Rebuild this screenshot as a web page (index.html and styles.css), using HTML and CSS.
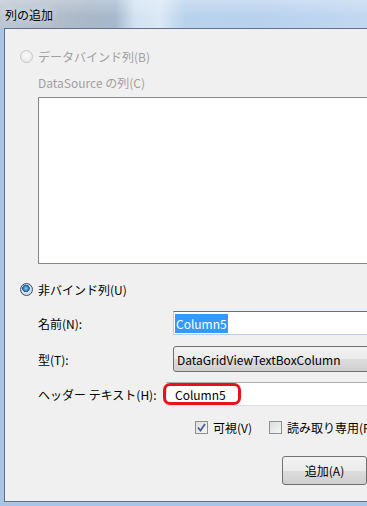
FILE: index.html
```html
<!DOCTYPE html>
<html lang="ja">
<head>
    <meta charset="UTF-8">
    <title>列の追加</title>
    <link rel="stylesheet" href="styles.css">
</head>
<body>
    <div class="window">
        <div class="titlebar">
            <span class="title">列の追加</span>
        </div>
        <div class="client">
            <div class="radio-row disabled">
                <span class="radio"></span>
                <span>データバインド列(B)</span>
            </div>
            <div class="caption disabled">DataSource の列(C)</div>
            <div class="listbox"></div>

            <div class="radio-row radio-unbound">
                <span class="radio checked"></span>
                <span>非バインド列(U)</span>
            </div>

            <div class="field field-name">
                <span class="field-label">名前(N):</span>
                <div class="textbox focused"><span class="selection">Column5</span></div>
            </div>
            <div class="field field-type">
                <span class="field-label">型(T):</span>
                <div class="combo">DataGridViewTextBoxColumn</div>
            </div>
            <div class="field field-header">
                <span class="field-label">ヘッダー テキスト(H):</span>
                <div class="textbox header-box">
                    <span>Column5</span>
                    <!-- red annotation ring drawn over the textbox -->
                    <span class="mark"></span>
                </div>
            </div>

            <div class="checks">
                <label class="check-item">
                    <span class="checkbox">
                        <svg width="9" height="9" viewBox="0 0 9 9"><path d="M1 4.5 L3.5 7.5 L8 1" fill="none" stroke="#4a5f97" stroke-width="1.8"/></svg>
                    </span>
                    <span>可視(V)</span>
                </label>
                <label class="check-item">
                    <span class="checkbox"></span>
                    <span>読み取り専用(R)</span>
                </label>
            </div>

            <div class="actions">
                <button class="button">追加(A)</button>
            </div>
        </div>
    </div>
</body>
</html>
```

FILE: styles.css
```css
body {
    margin: 0;
    padding: 0;
    overflow: hidden;
    font-family: 'Noto Sans CJK JP', 'Noto Sans', sans-serif;
    font-size: 12px;
    color: #000;
}

.window {
    width: 367px;
    height: 506px;
    overflow: hidden;
    background: #a8c5e5;
}

.titlebar {
    height: 28px;
    display: flex;
    align-items: center;
    padding-left: 5px;
    background:
        linear-gradient(180deg, rgba(255, 255, 255, 0.25), rgba(255, 255, 255, 0) 60%),
        linear-gradient(90deg, #bdc7d3 0, #aab7c6 90px, #a6b9cf 115px, #d3e2f1 135px, #dbe8f5 160px, #b9d2ec 185px, #b8d1ee 260px, #c2d8f1 367px);
}

.title {
    font-size: 12px;
    color: #000;
    text-shadow: 0 0 6px rgba(255, 255, 255, 0.8);
}

.client {
    width: 420px;
    height: 474px;
    box-sizing: border-box;
    margin-left: 4px;
    border: 1px solid #5f7088;
    background: #f0f0f0;
    display: flex;
    flex-direction: column;
}

.disabled {
    color: #a0a0a0;
}

.radio-row {
    height: 16px;
    display: flex;
    align-items: center;
    gap: 5px;
    padding-left: 15px;
    margin-top: 19px;
}

.radio-unbound {
    margin-top: 17px;
    color: #000;
}

.radio {
    width: 13px;
    height: 13px;
    box-sizing: border-box;
    border-radius: 50%;
    border: 1px solid #c3c6ca;
    background: radial-gradient(circle at 50% 40%, #fbfbfb 0, #e2e2e2 100%);
}

.radio.checked {
    border-color: #3f4f63;
    background:
        radial-gradient(circle at 45% 40%, #9fd6f6 0, #3d8fce 2px, #1c5a94 3.5px, transparent 4px),
        radial-gradient(circle, #e9eef3 0, #c4ccd6 100%);
}

.caption {
    height: 16px;
    line-height: 16px;
    padding-left: 33px;
    margin-top: 11px;
}

.listbox {
    height: 167px;
    box-sizing: border-box;
    margin: 6px 0 0 33px;
    border: 1px solid #828790;
    background: #fff;
}

.field {
    display: flex;
    align-items: center;
    padding-left: 33px;
}

.field-label {
    width: 135px;
    flex-shrink: 0;
}

.field-name {
    margin-top: 14px;
}

.field-type {
    margin-top: 11px;
}

.field-header {
    margin-top: 10px;
}

.field-header .field-label {
    width: 128px;
}

.textbox {
    flex: 1;
    height: 24px;
    box-sizing: border-box;
    display: flex;
    align-items: center;
    padding-left: 1px;
    border: 1px solid #dbdfe6;
    border-top-color: #abadb3;
    background: #fff;
}

.textbox.focused {
    border-color: #b5cfe7;
    border-top-color: #3d7bad;
}

.selection {
    background: #3399ff;
    color: #fff;
    line-height: 19px;
    padding: 0 1px;
}

.header-box {
    position: relative;
    padding-left: 8px;
}

.mark {
    position: absolute;
    left: -4px;
    top: 0;
    width: 78px;
    height: 22px;
    box-sizing: border-box;
    border: 3px solid #e8121b;
    border-radius: 7px;
}

.combo {
    flex: 1;
    height: 26px;
    box-sizing: border-box;
    display: flex;
    align-items: center;
    padding-left: 3px;
    border: 1px solid #707070;
    border-radius: 3px;
    background: linear-gradient(180deg, #f2f2f2 0, #ebebeb 50%, #dddddd 51%, #cfcfcf 100%);
}

.checks {
    height: 16px;
    display: flex;
    align-items: center;
    padding-left: 190px;
    margin-top: 13px;
}

.check-item {
    display: flex;
    align-items: center;
    gap: 5px;
    margin-right: 17px;
    white-space: nowrap;
}

.checkbox {
    width: 13px;
    height: 13px;
    box-sizing: border-box;
    border: 1px solid #8e8f8f;
    background: linear-gradient(135deg, #dcdcdc 0, #f6f6f6 100%);
    display: flex;
    align-items: center;
    justify-content: center;
}

.actions {
    margin-top: 21px;
    padding-left: 277px;
}

.button {
    width: 85px;
    height: 29px;
    font-family: inherit;
    font-size: 12px;
    color: #000;
    border: 1px solid #707070;
    border-radius: 3px;
    background: linear-gradient(180deg, #f2f2f2 0, #ebebeb 50%, #dddddd 51%, #cfcfcf 100%);
    padding: 0;
}
```
